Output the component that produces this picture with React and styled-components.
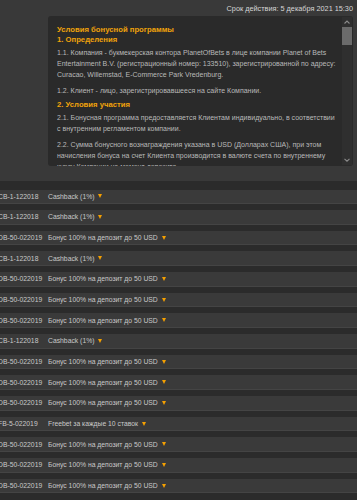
import React from "react";
import styled, { createGlobalStyle } from "styled-components";

const GlobalStyle = createGlobalStyle`
  html, body { margin: 0; padding: 0; }
  body {
    background: #2b2b2b;
    font-family: "Liberation Sans", Arial, sans-serif;
    overflow: hidden;
  }
`;

const Page = styled.div`
  width: 357px;
  height: 500px;
  overflow: hidden;
  display: flex;
  flex-direction: column;
`;

const Expanded = styled.section`
  background: #393939;
  padding: 4px 4px 15px 48px;
  display: flex;
  flex-direction: column;
`;

const Expiry = styled.div`
  text-align: right;
  color: #d6d6d6;
  font-size: 7.3px;
  line-height: 9px;
  white-space: nowrap;
  margin-bottom: 3px;
`;

const TermsBox = styled.div`
  height: 150px;
  background: #2a2a2a;
  border-radius: 3px;
  display: flex;
  overflow: hidden;
`;

const TermsContent = styled.div`
  flex: 1;
  padding: 9px 0 0 9px;
  overflow: hidden;
`;

const Heading = styled.div`
  color: #f0a30a;
  font-weight: bold;
  font-size: 7.7px;
  line-height: 9.5px;
  margin-top: ${(p) => (p.$first ? "0" : "3.5px")};
  white-space: nowrap;
`;

const Para = styled.p`
  margin: 5.6px 0 0;
  color: #b9b9b9;
  font-size: 7px;
  line-height: 11px;
  white-space: nowrap;
  ${Heading} + & { margin-top: 2.5px; }
`;

const Scrollbar = styled.div`
  width: 10px;
  margin: 1px 1px 1px 0;
  background: #2f2f2f;
  display: flex;
  flex-direction: column;
  align-items: center;
`;

const ScrollBtn = styled.div`
  width: 10px;
  height: 10px;
  display: flex;
  align-items: center;
  justify-content: center;
`;

const Thumb = styled.div`
  width: 10px;
  height: 18px;
  background: #6b6b6b;
  margin-bottom: auto;
`;

const Chevron = ({ up }) => (
  <svg width="6" height="4" viewBox="0 0 6 4">
    <path
      d={up ? "M0.5 3.5 L3 1 L5.5 3.5" : "M0.5 0.8 L3 3.2 L5.5 0.8"}
      stroke="#8a8a8a"
      strokeWidth="1.1"
      fill="none"
    />
  </svg>
);

const List = styled.div`
  display: flex;
  flex-direction: column;
  gap: 6px;
  padding-top: 8.5px;
`;

const Row = styled.div`
  height: 14.67px;
  background: #3a3a3a;
  border-bottom: 1px solid #444;
  box-sizing: border-box;
  display: flex;
  align-items: center;
  color: #c9c9c9;
  font-size: 6.8px;
  white-space: nowrap;
`;

const Code = styled.span`
  width: 50px;
  margin-left: -2px;
  flex-shrink: 0;
`;

const Title = styled.span`
  display: flex;
  align-items: center;
`;

const Caret = styled.span`
  width: 0;
  height: 0;
  margin-left: 4px;
  border-left: 2.5px solid transparent;
  border-right: 2.5px solid transparent;
  border-top: 4px solid #f5a000;
`;

const CB = ["CB-1-122018", "Cashback (1%)"];
const DB = ["DB-50-022019", "Бонус 100% на депозит до 50 USD"];
const FB = ["FB-5-022019", "Freebet за каждые 10 ставок"];

const rows = [CB, CB, DB, CB, DB, DB, DB, CB, DB, DB, DB, FB, DB, DB, DB];

export default function App() {
  return (
    <Page>
      <GlobalStyle />
      <Expanded>
        <Expiry>Срок действия: 5 декабря 2021 15:30</Expiry>
        <TermsBox>
          <TermsContent>
            <Heading $first>Условия бонусной программы</Heading>
            <Heading $first>1. Определения</Heading>
            <Para>
              1.1. Компания - букмекерская контора PlanetOfBets в лице компании Planet of Bets
              <br />
              Entertainment B.V. (регистрационный номер: 133510), зарегистрированной по адресу:
              <br />
              Curacao, Willemstad, E-Commerce Park Vredenburg.
            </Para>
            <Para>1.2. Клиент - лицо, зарегистрировавшееся на сайте Компании.</Para>
            <Heading>2. Условия участия</Heading>
            <Para>
              2.1. Бонусная программа предоставляется Клиентам индивидуально, в соответствии
              <br />
              с внутренним регламентом компании.
            </Para>
            <Para>
              2.2. Сумма бонусного вознаграждения указана в USD (Долларах США), при этом
              <br />
              начисления бонуса на счет Клиента производится в валюте счета по внутреннему
              <br />
              курсу Компании на момент депозита.
            </Para>
          </TermsContent>
          <Scrollbar>
            <ScrollBtn>
              <Chevron up />
            </ScrollBtn>
            <Thumb />
            <ScrollBtn>
              <Chevron />
            </ScrollBtn>
          </Scrollbar>
        </TermsBox>
      </Expanded>
      <List>
        {rows.map(([code, title], i) => (
          <Row key={i}>
            <Code>{code}</Code>
            <Title>
              {title}
              <Caret />
            </Title>
          </Row>
        ))}
      </List>
    </Page>
  );
}
